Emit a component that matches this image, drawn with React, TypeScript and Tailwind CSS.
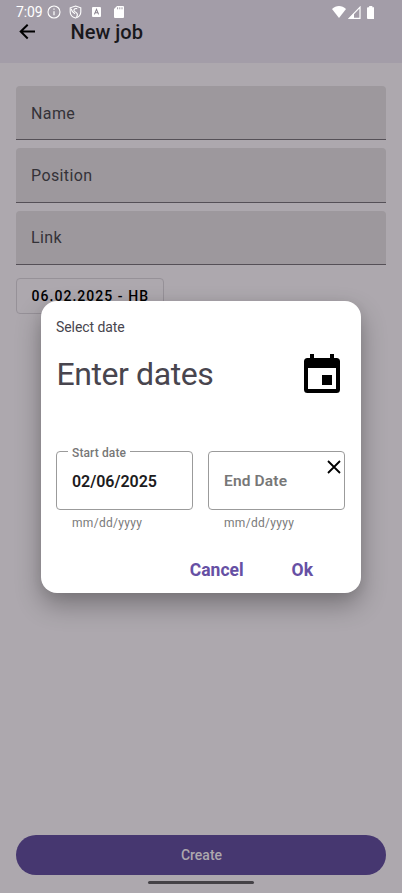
import React from "react";

function StatusBar() {
  return (
    <div className="flex h-5 items-end justify-between pl-4 pr-7 text-white">
      <div className="flex h-4 items-center">
        <span className="w-[31px] whitespace-nowrap pb-px text-[14px] leading-4 tracking-[-0.1px]">7:09</span>
        <svg className="h-[14px] w-[14px]" viewBox="0 0 14 14" fill="none" stroke="white">
          <circle cx="7" cy="7" r="6" strokeWidth="1.1" />
          <path d="M7 6.2v4M7 3.5v1.3" strokeWidth="1.2" />
        </svg>
        <svg className="ml-2 h-[14px] w-[13px]" viewBox="0 0 13 14" fill="none" stroke="white" strokeWidth="1.1">
          <path d="M6.5 1 11.800 2.800v4.100c0 2.800-2.300 5.200-5.300 6.200-3-1-5.300-3.400-5.300-6.200V2.800Z" />
          <path d="M8.200 3.600C5 3 4.200 5.200 5.600 6.400l2 1.500c1.200 1.100.9 2.700 0 4.400M2 3.700c.5 2.500 1.500 3.500 4 5.200" />
        </svg>
        <svg className="ml-[9.500px] h-[10px] w-[9px]" viewBox="0 0 9 10">
          <rect width="9" height="10" rx="1" fill="white" />
          <path d="m2.400 7.400 2.100-5 2.100 5M3.200 5.800h2.600" fill="none" stroke="#8b8590" strokeWidth="1.100" />
        </svg>
        <svg className="ml-[13px] h-3 w-[10px]" viewBox="0 0 10 12">
          <path d="M3 0h6q1 0 1 1v10q0 1-1 1H1q-1 0-1-1V3Z" fill="white" />
          <path d="M3.600 1.300v2M5.800 1.300v2M8 1.300v2" stroke="#a39da8" strokeWidth="1" />
        </svg>
      </div>
      <div className="flex h-4 items-center">
        <svg className="h-3 w-[14px]" viewBox="0 0 14 12">
          <path d="M0 3C4-1 10-1 14 3L7 12Z" fill="white" />
        </svg>
        <svg className="ml-[1.500px] h-[13px] w-[13px]" viewBox="0 0 13 13">
          <path d="M1.200 12.300H12V1.200Z" fill="none" stroke="white" strokeWidth="1.200" />
          <path d="M1 12.300 6 7.300v5Z" fill="white" />
        </svg>
        <svg className="ml-[6px] h-[13px] w-[7.500px]" viewBox="0 0 8 13" preserveAspectRatio="none">
          <path d="M2.300 0h3.400v1.200H7q1 0 1 1V12q0 1-1 1H1q-1 0-1-1V2.200q0-1 1-1h1.300Z" fill="white" />
        </svg>
      </div>
    </div>
  );
}

function Field({ label }: { label: string }) {
  return (
    <div className="flex h-[54.300px] items-center rounded-t-[4px] border-b border-[#555057] bg-[#9d989d] px-[15px] pt-[2px] text-[16px] tracking-[0.400px] text-[#343238]">
      {label}
    </div>
  );
}

function DateField({ label, value, clearable }: { label: string; value?: string; clearable?: boolean }) {
  return (
    <div className="w-[137px]">
      <div className="relative flex h-[59px] items-center rounded-[4px] border border-[#9b9b9b] px-[15px] pt-[2.500px]">
        {value ? (
          <>
            <span className="absolute left-[11px] top-[-7px] whitespace-nowrap bg-white px-1 text-[12px] font-medium leading-4 tracking-[0.120px] text-[#777]">
              {label}
            </span>
            <span className="text-[16px] font-semibold tracking-[-0.040px] text-[#1c1b20]">{value}</span>
          </>
        ) : (
          <span className="text-[15.500px] font-semibold tracking-[0.150px] text-[#777]">{label}</span>
        )}
        {clearable && (
          <svg className="absolute right-[3.500px] top-[8px] h-[14px] w-[14px]" viewBox="0 0 14 14" stroke="#000" strokeWidth="1.800">
            <path d="m1 1 12 12M13 1 1 13" />
          </svg>
        )}
      </div>
      <div className="mt-[5px] pl-4 text-[12px] leading-4 tracking-[0.300px] text-[#7a7a7a]">mm/dd/yyyy</div>
    </div>
  );
}

function DateDialog() {
  return (
    <div className="absolute left-[40.500px] top-[301px] flex h-[291.500px] w-[320.500px] flex-col rounded-[16px] bg-white px-[15.500px] shadow-[0_12px_26px_rgba(0,0,0,0.3),0_2px_12px_rgba(0,0,0,0.06)]">
      <div className="mt-[18px] text-[14px] leading-4 tracking-[-0.080px] text-[#48454e]">Select date</div>
      <div className="mt-[14px] flex h-12 items-center justify-between pr-[5.500px]">
        <span className="pl-[0.500px] pt-[2px] text-[32px] leading-10 tracking-[-0.420px] text-[#48454e]">Enter dates</span>
        <svg className="h-[39px] w-9" viewBox="0 0 36 39">
          <path
            fillRule="evenodd"
            d="M6 0h4v4h16V0h4v4h2.500Q36 4 36 7.500v28Q36 39 32.500 39h-29Q0 39 0 35.500v-28Q0 4 3.500 4H6ZM4 14v21h28V14Z"
          />
          <path d="M18 21h10v10H18Z" />
        </svg>
      </div>
      <div className="mt-[54px] flex gap-[15px]">
        <DateField label="Start date" value="02/06/2025" />
        <DateField label="End Date" clearable />
      </div>
      <div className="mt-[27px] flex justify-end gap-12 pr-[32.500px] text-[17.500px] font-bold leading-6 text-[#6650a4]">
        <button>Cancel</button>
        <button>Ok</button>
      </div>
    </div>
  );
}

export default function App() {
  return (
    <div className="relative flex h-[893px] w-[402px] flex-col overflow-hidden bg-[#ada8ae] font-[Roboto,sans-serif]">
      <header className="h-[63px] bg-[#a39da8]">
        <StatusBar />
        <div className="flex h-6 items-center pl-[19px]">
          <svg className="h-4 w-4" viewBox="0 0 16 16" fill="none" stroke="#000" strokeWidth="2">
            <path d="M16 7.500H2M8.700.7 1.700 7.500l7 7" />
          </svg>
          <h1 className="ml-[35.600px] text-[20px] font-medium leading-6 text-[#19181c]">New job</h1>
        </div>
      </header>
      <main className="flex flex-1 flex-col px-4 pt-[23px]">
        <div className="flex flex-col gap-2">
          <Field label="Name" />
          <Field label="Position" />
          <Field label="Link" />
        </div>
        <div className="mt-[13px] flex h-9 w-[148px] items-center whitespace-nowrap rounded-[4px] border border-[#969198] pl-[14.500px] pt-[2px] text-[14px] font-medium tracking-[1.040px] text-black">
          06.02.2025 - HB
        </div>
        <button className="mt-auto h-[39.500px] rounded-full bg-[#463770] pl-px pt-[2px] text-[14px] font-medium text-[#ada8ae]">
          Create
        </button>
        <div className="mb-[9px] mt-[6.500px] h-[3px] w-[106px] self-center rounded-full bg-[#454247]" />
      </main>
      <DateDialog />
    </div>
  );
}
